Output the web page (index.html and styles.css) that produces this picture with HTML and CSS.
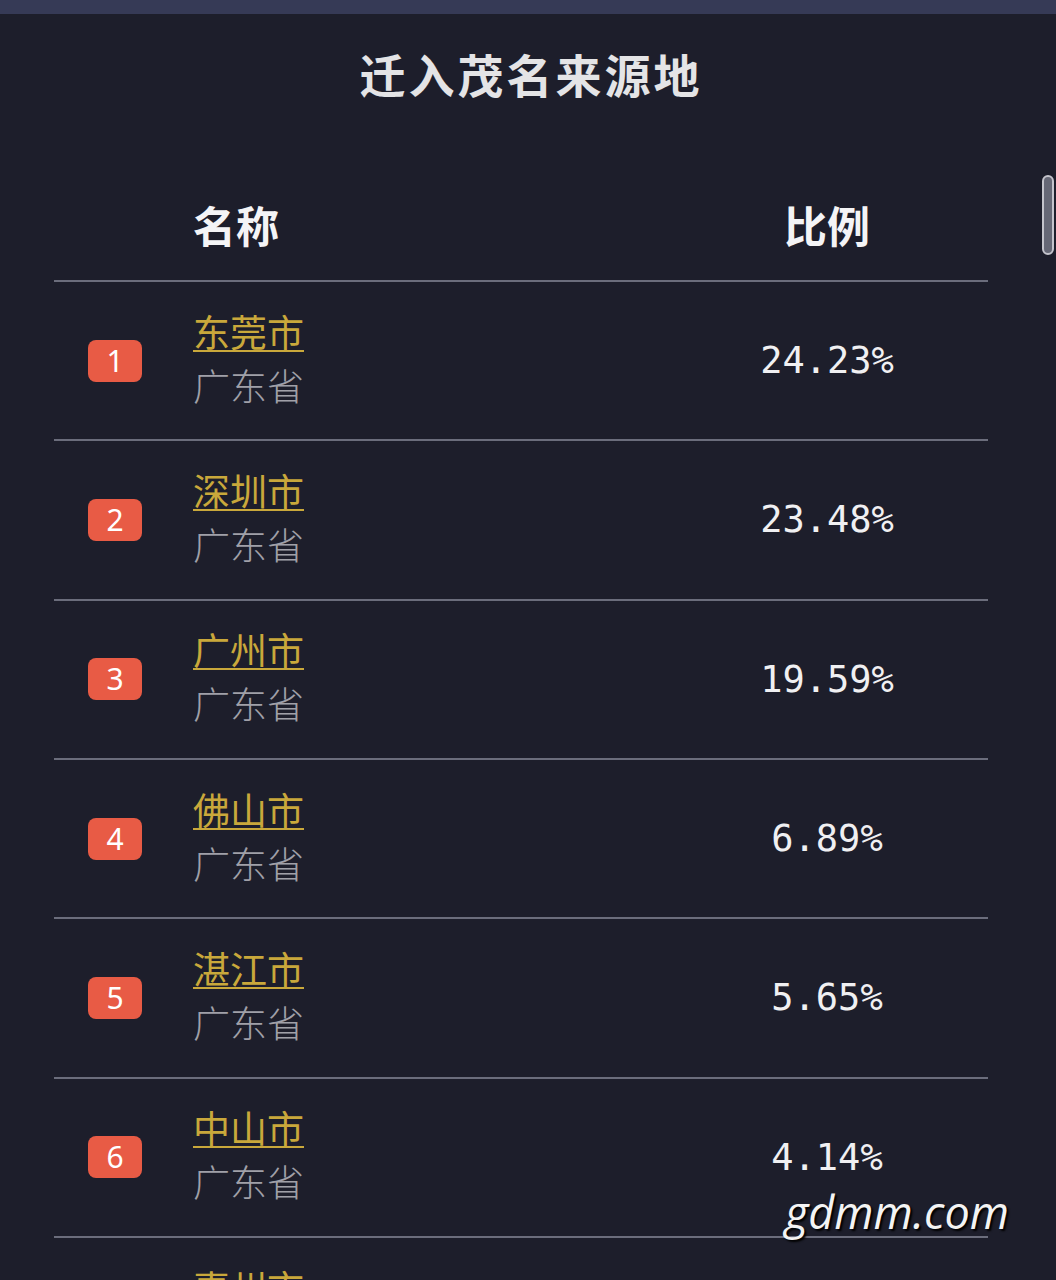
FILE: index.html
```html
<!DOCTYPE html>
<html lang="zh-CN">
<head>
<meta charset="utf-8">
<title>迁入茂名来源地</title>
<link rel="stylesheet" href="styles.css">
</head>
<body>
<div class="topbar"></div>
<main class="page">
  <h1 class="title">迁入茂名来源地</h1>
  <div class="table">
    <div class="thead">
      <div class="c-rank"></div>
      <div class="c-head">名称</div>
      <div class="c-pct">比例</div>
    </div>
    <div class="row">
      <div class="c-rank"><span class="badge">1</span></div>
      <div class="c-name"><a class="city">东莞市</a><span class="prov">广东省</span></div>
      <div class="c-pct">24.23%</div>
    </div>
    <div class="row">
      <div class="c-rank"><span class="badge">2</span></div>
      <div class="c-name"><a class="city">深圳市</a><span class="prov">广东省</span></div>
      <div class="c-pct">23.48%</div>
    </div>
    <div class="row">
      <div class="c-rank"><span class="badge">3</span></div>
      <div class="c-name"><a class="city">广州市</a><span class="prov">广东省</span></div>
      <div class="c-pct">19.59%</div>
    </div>
    <div class="row">
      <div class="c-rank"><span class="badge">4</span></div>
      <div class="c-name"><a class="city">佛山市</a><span class="prov">广东省</span></div>
      <div class="c-pct">6.89%</div>
    </div>
    <div class="row">
      <div class="c-rank"><span class="badge">5</span></div>
      <div class="c-name"><a class="city">湛江市</a><span class="prov">广东省</span></div>
      <div class="c-pct">5.65%</div>
    </div>
    <div class="row">
      <div class="c-rank"><span class="badge">6</span></div>
      <div class="c-name"><a class="city">中山市</a><span class="prov">广东省</span></div>
      <div class="c-pct">4.14%</div>
    </div>
    <div class="row">
      <div class="c-rank"><span class="badge">7</span></div>
      <div class="c-name"><a class="city">惠州市</a><span class="prov">广东省</span></div>
      <div class="c-pct">3.12%</div>
    </div>
  </div>
</main>
<div class="scrollthumb"></div>
<div class="watermark">gdmm.com</div>
</body>
</html>
```
FILE: styles.css
```css
html, body {
  margin: 0;
  padding: 0;
  background: #1d1e2b;
  overflow: hidden;
  height: 1280px;
}
body {
  position: relative;
  font-family: "Noto Sans CJK SC", "Noto Sans", sans-serif;
  color: #e8e8ea;
}
.topbar {
  height: 14px;
  background: #363a56;
}
.page {
  display: flex;
  flex-direction: column;
  align-items: center;
}
.title {
  margin: 0;
  height: 168px;
  padding-top: 36px;
  box-sizing: border-box;
  font-size: 46px;
  line-height: 46px;
  font-weight: 700;
  color: #e4e4e6;
  letter-spacing: 3px;
  margin-left: 6px;
}
.table {
  width: 934px;
  align-self: flex-start;
  margin-left: 54px;
}
.thead, .row {
  display: flex;
  align-items: center;
  box-sizing: border-box;
  border-bottom: 2px solid #6b6d7c;
}
.thead {
  height: 100px;
  font-size: 43px;
  font-weight: 700;
  color: #f4f4f6;
  padding-bottom: 14px;
}
.row {
  height: 159.33px;
}
.c-rank {
  width: 139px;
  flex: none;
  display: flex;
}
.c-head {
  flex: 1;
}
.c-name {
  flex: 1;
  display: flex;
  flex-direction: column;
  padding-bottom: 6px;
}
.c-pct {
  width: 322px;
  flex: none;
  text-align: center;
}
.row .c-pct {
  font-family: "DejaVu Sans Mono", monospace;
  font-size: 37px;
  color: #f0f0f2;
}
.badge {
  margin-left: 34px;
  width: 54px;
  height: 42px;
  border-radius: 8px;
  background: #e85b45;
  color: #fff;
  font-family: "Noto Sans", sans-serif;
  font-size: 30px;
  line-height: 42px;
  text-align: center;
}
.city, .prov {
  font-size: 37px;
  line-height: 54px;
}
.city {
  align-self: flex-start;
  color: #c9a83b;
  text-decoration: underline;
  text-decoration-thickness: 2px;
  text-underline-offset: 3px;
}
.prov {
  color: #a0a0a8;
  font-weight: 300;
}
.scrollthumb {
  position: absolute;
  left: 1042px;
  top: 175px;
  width: 8px;
  height: 76px;
  border: 2px solid #c4c4cc;
  border-radius: 7px;
  background: #666876;
}
.watermark {
  position: absolute;
  left: 785px;
  top: 1184px;
  font-family: "Open Sans", sans-serif;
  font-style: italic;
  font-weight: 500;
  font-size: 45px;
  line-height: 56px;
  color: #f4f4f4;
  text-shadow: 2px 2px 2px #000;
}
```
